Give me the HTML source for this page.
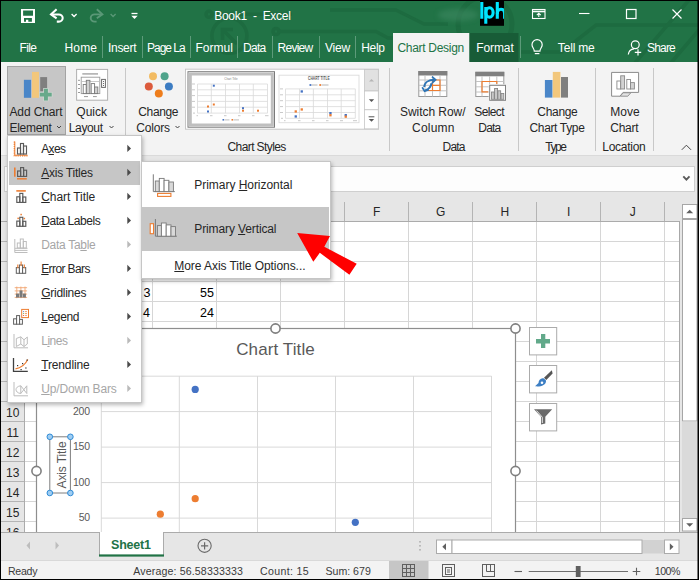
<!DOCTYPE html>
<html>
<head>
<meta charset="utf-8">
<title>Book1 - Excel</title>
<style>
*{box-sizing:border-box;margin:0;padding:0}
html,body{width:699px;height:580px;overflow:hidden}
body{font-family:"Liberation Sans",sans-serif;font-size:12px;color:#262626;background:#e6e6e6;position:relative}
.abs{position:absolute}
.t{position:absolute;white-space:pre;line-height:1}
#titlebar{left:0;top:0;width:699px;height:62px;background:#217346}
.tab{position:absolute;top:40px;color:#fff;font-size:13px;white-space:nowrap;line-height:15px}
.tsep{position:absolute;top:36px;width:1px;height:22px;background:#4b8f6a}
#ribbon{left:0;top:62px;width:699px;height:93px;background:#f3f3f3}
.rl{position:absolute;white-space:nowrap;font-size:12px;line-height:16px;color:#262626;text-align:center}
.gl{position:absolute;top:140px;font-size:12px;line-height:14px;color:#262626;white-space:nowrap}
.gsep{position:absolute;top:69px;width:1px;height:82px;background:#c6c6c6}
.colh{position:absolute;top:201px;height:20px;width:64px;text-align:center;font-size:13px;line-height:21px;color:#262626;border-right:1px solid #b8b8b8}
.rowh{position:absolute;left:1px;width:24px;height:20px;text-align:center;font-size:13px;line-height:21px;color:#262626;border-bottom:1px solid #b8b8b8;background:#e6e6e6}
.cell{position:absolute;font-size:13px;line-height:20px;color:#000;text-align:right;width:60px}
.mi{position:absolute;left:41px;font-size:13px;line-height:16px;color:#262626;white-space:nowrap}
.mi.dis{color:#a6a6a6}
.arr{position:absolute;left:126px;width:0;height:0;border-left:5px solid #444;border-top:4px solid transparent;border-bottom:4px solid transparent}
.arr.dis{border-left-color:#b5b5b5}
u{text-decoration:underline;text-underline-offset:1px}
.ytick{position:absolute;width:40px;text-align:right;font-size:12px;line-height:14px;color:#595959}
.st{position:absolute;top:565px;font-size:12px;line-height:14px;color:#3b3b3b;white-space:nowrap}
</style>
</head>
<body>

<!-- ================= TITLE BAR ================= -->
<div id="titlebar" class="abs">
  <svg class="abs" style="left:0;top:0" width="699" height="62" viewBox="0 0 699 62">
    <!-- faint background decoration -->
    <defs><filter id="bl" x="-50%" y="-50%" width="200%" height="200%"><feGaussianBlur stdDeviation="2.5"/></filter></defs>
    <g fill="none" stroke="#1d6a3f" stroke-width="3.6" opacity="0.85">
      <circle cx="229.4" cy="35.8" r="17.5"/>
      <path d="M237 44 L223 30 M233 29.5 H222.5 V40"/>
      <circle cx="209" cy="14.3" r="3"/>
      <path d="M212 14.3 H292"/>
      <circle cx="276" cy="31.5" r="3"/>
      <path d="M279 31.5 H376 L388 38 H432"/>
      <path d="M330 10 H396 L424 24 H448"/>
      <circle cx="485" cy="24" r="27" stroke-width="5"/>
      <path d="M520 52 H562 L596 25 H699"/>
      <path d="M689 0 L634 64"/>
      <path d="M699 30 L670 64"/>
    </g>
    <ellipse cx="458" cy="15" rx="20" ry="6" fill="#3f8a63" opacity="0.55" filter="url(#bl)"/>
  </svg>
</div>

<!-- QAT icons + title + window controls -->
<svg class="abs" style="left:0;top:0" width="699" height="62" viewBox="0 0 699 62">
  <!-- save -->
  <path fill-rule="evenodd" fill="#fff" d="M21 8.9 H35 V22.9 H21 Z M23.1 10.4 V15.7 H33 V10.4 Z M24 18 V21.7 H26 V19.8 H28.3 V21.7 H31.9 V18 Z"/>
  <!-- undo -->
  <g fill="none" stroke="#fff" stroke-width="2.05">
    <path d="M56.6 9.3 L51 14.4 L56.6 18.3"/>
    <path d="M51.5 14.4 H58.8 A3.9 3.6 0 0 1 58.8 21.6 H56.8"/>
  </g>
  <path d="M71.6 14 L74.1 16.5 L76.6 14" fill="none" stroke="#fff" stroke-width="1.3"/>
  <!-- redo (disabled) -->
  <g fill="none" stroke="#5a9877" stroke-width="1.9">
    <path d="M96.8 9.3 L102.4 14.4 L96.8 18.3"/>
    <path d="M101.9 14.4 H94.6 A3.9 3.6 0 0 0 94.6 21.6 H96.6"/>
  </g>
  <path d="M110.6 14 L113.1 16.5 L115.6 14" fill="none" stroke="#5a9877" stroke-width="1.3"/>
  <!-- customize QAT -->
  <path d="M131.5 13.5 H137.5" stroke="#fff" stroke-width="1.3"/>
  <path d="M131.3 15.8 H137.7 L134.5 19 Z" fill="#fff"/>
  <!-- lph logo -->
  <rect x="480" y="1" width="24" height="24.8" fill="#000"/>
  <clipPath id="lc"><rect x="480" y="1" width="24" height="24.8"/></clipPath>
  <g fill="none" stroke="#00e5ff" stroke-width="3.1" clip-path="url(#lc)">
    <path d="M481.8 2 V18.7"/>
    <path d="M485.8 7 V23.7"/>
    <ellipse cx="489.5" cy="12.4" rx="3.6" ry="4.7"/>
    <path d="M497.3 2 V18.7"/>
    <path d="M497.3 14 C497.3 10.2 499.3 9.3 501 9.3 C503.2 9.3 504.6 10.6 504.6 13.2 V18.7"/>
  </g>
  <!-- ribbon display options -->
  <g fill="none" stroke="#fff" stroke-width="1.1">
    <rect x="532.5" y="9.5" width="12.5" height="9"/>
    <path d="M532.5 11.5 H545" stroke-width="1.6"/>
    <path d="M538.8 17 V13.6 M536.8 15.2 L538.8 13.3 L540.8 15.2"/>
  </g>
  <!-- minimize -->
  <path d="M579 13.5 H589.5" stroke="#fff" stroke-width="1.1"/>
  <!-- maximize -->
  <rect x="626.5" y="9.5" width="9.5" height="9" fill="none" stroke="#fff" stroke-width="1.2"/>
  <!-- close -->
  <path d="M672.5 9.5 L681.5 18.5 M681.5 9.5 L672.5 18.5" stroke="#fff" stroke-width="1.2"/>
  <!-- tab separators -->
  <g stroke="#5d9b7a" stroke-width="1">
    <path d="M102.5 36 V58 M142.5 36 V58 M190.5 36 V58 M237.5 36 V58 M272.5 36 V58 M319.5 36 V58 M355.5 36 V58 M520.5 36 V58"/>
  </g>
  <!-- active tab -->
  <rect x="393" y="33" width="76.5" height="29" fill="#f3f3f3"/>
  <rect x="469.5" y="33" width="49" height="29" fill="#185c37"/>
  <!-- lightbulb -->
  <g fill="none" stroke="#fff" stroke-width="1.2">
    <path d="M534.3 51.2 C534.3 48.5 532 47.5 532 44.8 A5.1 5.1 0 0 1 542.2 44.8 C542.2 47.5 539.9 48.5 539.9 51.2 Z"/>
    <path d="M534.8 53.6 H539.4"/>
  </g>
  <!-- share person -->
  <g fill="none" stroke="#fff" stroke-width="1.2">
    <circle cx="635.3" cy="44.8" r="3.9"/>
    <path d="M628.3 54.5 C628.8 50.5 631.5 49 634 48.8"/>
    <path d="M634.8 52.3 H641.2 M638 49.2 V55.5"/>
  </g>
</svg>
<span class="t" style="left:214.30px;top:9.84px;font-size:12px;color:#fff;letter-spacing:-0.300px">Book1  -  Excel</span>
<span class="t" style="left:19.50px;top:41.64px;font-size:12px;color:#fff;letter-spacing:-0.612px">File</span>
<span class="t" style="left:64.50px;top:41.64px;font-size:12px;color:#fff;letter-spacing:0.163px">Home</span>
<span class="t" style="left:108.00px;top:41.64px;font-size:12px;color:#fff;letter-spacing:-0.302px">Insert</span>
<span class="t" style="left:147.00px;top:41.64px;font-size:12px;color:#fff;letter-spacing:-1.001px">Page La</span>
<span class="t" style="left:195.50px;top:41.64px;font-size:12px;color:#fff;letter-spacing:0.032px">Formul</span>
<span class="t" style="left:243.00px;top:41.64px;font-size:12px;color:#fff;letter-spacing:-0.716px">Data</span>
<span class="t" style="left:277.50px;top:41.64px;font-size:12px;color:#fff;letter-spacing:-0.729px">Review</span>
<span class="t" style="left:325.00px;top:41.64px;font-size:12px;color:#fff;letter-spacing:-0.198px">View</span>
<span class="t" style="left:361.20px;top:41.64px;font-size:12px;color:#fff;letter-spacing:-0.294px">Help</span>
<span class="t" style="left:397.50px;top:41.64px;font-size:12px;color:#217346;letter-spacing:-0.303px">Chart Design</span>
<span class="t" style="left:476.20px;top:41.64px;font-size:12px;color:#fff;letter-spacing:-0.081px">Format</span>
<span class="t" style="left:557.80px;top:41.64px;font-size:12px;color:#fff;letter-spacing:-0.168px">Tell me</span>
<span class="t" style="left:647.00px;top:41.64px;font-size:12px;color:#fff;letter-spacing:-0.806px">Share</span>
<div class="abs" style="left:0;top:0;width:699px;height:1px;background:#000"></div>

<!-- ================= RIBBON ================= -->

<div id="ribbon" class="abs"></div>
<svg class="abs" style="left:0;top:62px" width="699" height="95" viewBox="0 62 699 95">
  <!-- Add chart element button (pressed) -->
  <rect x="7.5" y="66.5" width="58" height="68" fill="#c6c6c6" stroke="#a3a3a3"/>
  <rect x="23.9" y="79.8" width="7.2" height="18" fill="#4a86c8"/>
  <rect x="32" y="71.9" width="7" height="25.9" fill="#f2c77c"/>
  <rect x="40.2" y="77.1" width="6.9" height="14.2" fill="#7f7f7f"/>
  <path d="M44 88.8 H47.9 V92.7 H51.7 V96.5 H47.9 V100.4 H44 V96.5 H39.9 V92.7 H44 Z" fill="#cdd5d0" stroke="#cdd5d0" stroke-width="1.6"/><path d="M44 88.8 H47.9 V92.7 H51.7 V96.5 H47.9 V100.4 H44 V96.5 H39.9 V92.7 H44 Z" fill="#67a98a"/>
  <path d="M57 126 L59 128 L61 126" fill="none" stroke="#444" stroke-width="1"/>
  <!-- Quick layout -->
  <rect x="76.6" y="69.4" width="31" height="30.8" fill="#fff" stroke="#b0b0b0"/>
  <path d="M82.3 73.9 H98" stroke="#ababab" stroke-width="1.5"/>
  <rect x="81.2" y="77.2" width="18.6" height="16.4" fill="#fff" stroke="#9a9a9a" stroke-width="0.9"/>
  <path d="M81.2 81.5 H99.8" stroke="#bdbdbd" stroke-width="0.8"/>
  <g stroke="#7a7a7a" stroke-width="0.9">
    <rect x="83.2" y="84.5" width="3.1" height="9.1" fill="#fff"/>
    <rect x="86.3" y="80.3" width="3.6" height="13.3" fill="#d2d2d2"/>
    <rect x="91.2" y="83.6" width="3.4" height="10" fill="#fff"/>
    <rect x="94.6" y="87" width="3.2" height="6.6" fill="#d2d2d2"/>
    <rect x="101.6" y="79.4" width="3.8" height="8" fill="#fff" stroke="#6a6a6a" stroke-width="1"/>
  </g>
  <path d="M78 80.3 H80 M78 84.5 H80 M78 88.5 H80 M78 92.5 H80 M84 96.6 H88 M93 96.6 H96.8" stroke="#9a9a9a" stroke-width="1"/>
  <g fill="#6a6a6a"><rect x="103" y="81" width="1" height="1"/><rect x="103" y="83" width="1" height="1"/><rect x="103" y="85" width="1" height="1"/></g>
  <path d="M109.5 126 L111.5 128 L113.5 126" fill="none" stroke="#444" stroke-width="1"/>
  <!-- Change colors -->
  <circle cx="153" cy="76.2" r="4" fill="#f2bb62"/>
  <circle cx="164.6" cy="76.2" r="4" fill="#4fa38b"/>
  <circle cx="148.8" cy="86.4" r="4" fill="#dc5b3c"/>
  <circle cx="168.9" cy="86.4" r="4" fill="#3c7cc2"/>
  <circle cx="158.8" cy="93.4" r="4" fill="#ee7d1c"/>
  <path d="M175.5 126 L177.5 128 L179.5 126" fill="none" stroke="#444" stroke-width="1"/>
  <!-- group separators -->
  <path d="M125.5 68 V151 M389.5 68 V151 M518.5 68 V151 M595.5 68 V151 M653.5 68 V151" stroke="#c8c8c8" stroke-width="1"/>
  <!-- gallery -->
  <g transform="translate(0,0.7)">
  <rect x="185.5" y="68.5" width="193" height="60" fill="#fff" stroke="#c6c6c6"/>
  <!-- thumb1 selected -->
  <rect x="188" y="71" width="86.5" height="55.5" fill="#fff" stroke="#7a7a7a"/>
  <rect x="190.3" y="73.3" width="82" height="51" fill="#fff" stroke="#bfbfbf" stroke-width="3"/>
  <g stroke="#d9d9d9" stroke-width="0.8">
    <path d="M197.5 83.3 H267.5 M197.5 89.1 H267.5 M197.5 94.9 H267.5 M197.5 100.7 H267.5 M197.5 106.5 H267.5 M197.5 112.4 H267.5"/>
    <path d="M197.5 83.3 V112.4 M211.3 83.3 V112.4 M225.5 83.3 V112.4 M239.5 83.3 V112.4 M253.3 83.3 V112.4 M267.5 83.3 V112.4"/>
  </g>
  <text x="224.3" y="79.6" font-family="Liberation Sans, sans-serif" font-size="3.5" fill="#808080" textLength="13.2" lengthAdjust="spacingAndGlyphs">Chart Title</text>
  <path d="M192 83.3 H195 M192 89.1 H195 M192 94.9 H195 M192 100.7 H195 M192 106.5 H195 M193 112.4 H195 M196.5 115 H198 M210 115 H212.5 M224 115 H226.5 M238 115 H240.5 M252 115 H254.5 M265 115 H268.5" stroke="#c9c9c9" stroke-width="1"/>
  <g fill="#4472c4"><rect x="212.8" y="84" width="2" height="2"/><rect x="207" y="109.8" width="2" height="2"/><rect x="242" y="106.5" width="2" height="2"/><rect x="222.5" y="118.3" width="1.6" height="1.6"/></g>
  <g fill="#ed7d31"><rect x="207" y="104.8" width="2" height="2"/><rect x="212.8" y="102.8" width="2" height="2"/><rect x="242" y="109" width="2" height="2"/><rect x="257" y="109" width="2" height="2"/><rect x="231.5" y="118.3" width="1.6" height="1.6"/></g>
  <path d="M224.5 119.2 H229.5 M233.5 119.2 H239" stroke="#bdbdbd" stroke-width="1"/>
  <!-- thumb2 -->
  <rect x="279" y="74.5" width="80" height="47.5" fill="#fff" stroke="#dcdcdc" stroke-width="0.9"/>
  <g stroke="#d9d9d9" stroke-width="0.8">
    <path d="M285.5 88.2 H355.3 M285.5 94.1 H355.3 M285.5 100 H355.3 M285.5 105.9 H355.3 M285.5 111.8 H355.3 M285.5 117.6 H355.3"/>
    <path d="M285.5 88.2 V117.6 M299.5 88.2 V117.6 M313.4 88.2 V117.6 M327.5 88.2 V117.6 M341.2 88.2 V117.6 M355.3 88.2 V117.6"/>
  </g>
  <text x="308.1" y="79.6" font-family="Liberation Sans, sans-serif" font-size="4.6" font-weight="bold" fill="#595959" textLength="21.6" lengthAdjust="spacingAndGlyphs">CHART TITLE</text>
  <path d="M311.5 84.3 H317.5 M321.5 84.3 H328.5" stroke="#b5b5b5" stroke-width="1"/>
  <path d="M280 88.2 H283 M280 94.1 H283 M280 100 H283 M280 105.9 H283 M280 111.8 H283 M281 117.6 H283 M284 120 H285.5 M298 120 H300.5 M312 120 H314.5 M326 120 H328.5 M340 120 H343 M353 120 H357" stroke="#c9c9c9" stroke-width="1"/>
  <g fill="#4472c4"><rect x="300.6" y="89.6" width="2.3" height="2.3"/><rect x="294.6" y="114.6" width="2.3" height="2.3"/><rect x="329.3" y="111.3" width="2.3" height="2.3"/><rect x="344.6" y="113.3" width="2.3" height="2.3"/><rect x="309.5" y="83.4" width="1.8" height="1.8"/></g>
  <g fill="#ed7d31"><rect x="294.6" y="109.6" width="2.3" height="2.3"/><rect x="300.6" y="107.6" width="2.3" height="2.3"/><rect x="329.3" y="113.4" width="2.3" height="2.3"/><rect x="344.6" y="114.8" width="2.3" height="2.3"/><rect x="319.3" y="83.4" width="1.8" height="1.8"/></g>
  </g>
  <!-- gallery scroll -->
  <g transform="translate(0,0.5)">
  <rect x="364.5" y="69" width="13.8" height="21.5" fill="#e1e1e1" stroke="#c6c6c6" stroke-width="0.8"/>
  <rect x="364.5" y="90.5" width="13.8" height="18.8" fill="#fff" stroke="#c6c6c6" stroke-width="0.8"/>
  <rect x="364.5" y="109.3" width="13.8" height="19" fill="#fff" stroke="#c6c6c6" stroke-width="0.8"/>
  <path d="M369 81 L371.5 78.5 L374 81 Z" fill="#b5b5b5"/>
  <path d="M368.8 98.8 H374.2 L371.5 101.5 Z" fill="#555"/>
  <path d="M368.6 116.3 H374.4" stroke="#555" stroke-width="1"/>
  <path d="M368.8 118.6 H374.2 L371.5 121.3 Z" fill="#555"/>
  </g>
  <!-- Switch Row/Column -->
  <rect x="418.8" y="71.5" width="28" height="25" fill="#fff" stroke="#9a9a9a"/>
  <rect x="418.3" y="71" width="29" height="4.5" fill="#808080"/>
  <path d="M419 80 H446.5 M419 85.3 H446.5 M419 90.8 H446.5 M425 75.5 V96.5 M432.5 75.5 V96.5 M440 75.5 V96.5" stroke="#c3c3c3" stroke-width="1"/>
  <path d="M432.5 80 H440 V90.5 H428 M432.5 80 V90.5 M432.5 85.3 H440" fill="none" stroke="#ed7d31" stroke-width="1.2"/>
  <g fill="none" stroke="#2e75b6" stroke-width="2">
    <path d="M424.3 87 C424.3 82.5 428.5 79.8 434.5 79.8"/>
    <path d="M432 76.6 L435.6 79.8 L432 83" stroke-width="1.7"/>
    <path d="M431.5 83.2 C431 87 428.5 89.5 425.3 90.3"/>
    <path d="M422.2 87.2 L424.6 91.2 L428.8 89.6" stroke-width="1.7"/>
  </g>
  <!-- Select Data -->
  <rect x="475.8" y="72.3" width="28" height="24.2" fill="#fff" stroke="#9a9a9a"/>
  <rect x="475.3" y="71.8" width="29" height="4.5" fill="#808080"/>
  <path d="M476 81.5 H503.5 M476 86.8 H503.5 M476 92 H503.5 M482 76.3 V96.5 M489.6 76.3 V96.5 M496.8 76.3 V96.5" stroke="#c3c3c3" stroke-width="1"/>
  <path d="M496.8 84 V81.5 H482 V91.8 H488.5" fill="none" stroke="#ed7d31" stroke-width="1.2"/>
  <rect x="488.6" y="84.2" width="17.8" height="17" fill="#f3f3f3"/>
  <rect x="489.7" y="85.3" width="15.8" height="15" fill="#fff" stroke="#7f7f7f" stroke-width="1"/>
  <g fill="#c8c8c8" stroke="#7f7f7f" stroke-width="0.8"><rect x="491.5" y="92" width="2.7" height="7.3"/><rect x="494.6" y="88.4" width="3" height="10.9"/><rect x="497.9" y="90.8" width="2.8" height="8.5"/><rect x="501" y="93.5" width="2.8" height="5.8"/></g>
  <!-- Change chart type -->
  <rect x="544.9" y="80" width="7.6" height="17.6" fill="#4a86c8"/>
  <rect x="552.8" y="71.9" width="7.6" height="25.7" fill="#f2c77c"/>
  <rect x="561" y="77" width="7" height="20.6" fill="#7f7f7f"/>
  <!-- Move chart -->
  <path d="M611.6 72.4 H638.6 V92.4 H623 L620 96.2 H611.6 Z" fill="#fff" stroke="#8a8a8a" stroke-width="1"/>
  <path d="M620.2 96.2 L623.2 92.8 H630.8 L627.8 96.2 Z" fill="#e4e4e4" stroke="#8a8a8a" stroke-width="0.9"/>
  <g stroke="#8a8a8a" stroke-width="0.9"><rect x="616.9" y="81" width="3.8" height="8" fill="#fff"/><rect x="620.7" y="75.8" width="3.9" height="13.2" fill="#d2d2d2"/><rect x="626.8" y="79.5" width="3.7" height="9.5" fill="#fff"/><rect x="630.5" y="82.6" width="3.9" height="6.4" fill="#d2d2d2"/></g>
  <!-- collapse chevron -->
  <path d="M681.8 149.8 L686.4 145.2 L691 149.8" fill="none" stroke="#444" stroke-width="1"/>
</svg>
<span class="t" style="left:9.50px;top:106.04px;font-size:12px;color:#262626;letter-spacing:-0.129px">Add Chart</span>
<span class="t" style="left:9.50px;top:122.04px;font-size:12px;color:#262626;letter-spacing:-0.287px">Element</span>
<span class="t" style="left:76.30px;top:106.04px;font-size:12px;color:#262626;letter-spacing:0.006px">Quick</span>
<span class="t" style="left:68.80px;top:122.04px;font-size:12px;color:#262626;letter-spacing:-0.366px">Layout</span>
<span class="t" style="left:138.30px;top:106.04px;font-size:12px;color:#262626;letter-spacing:-0.367px">Change</span>
<span class="t" style="left:136.30px;top:122.04px;font-size:12px;color:#262626;letter-spacing:-0.195px">Colors</span>
<span class="t" style="left:227.50px;top:141.04px;font-size:12px;color:#262626;letter-spacing:-0.596px">Chart Styles</span>
<span class="t" style="left:400.00px;top:106.04px;font-size:12px;color:#262626;letter-spacing:-0.052px">Switch Row/</span>
<span class="t" style="left:412.00px;top:122.04px;font-size:12px;color:#262626;letter-spacing:0.230px">Column</span>
<span class="t" style="left:474.30px;top:106.04px;font-size:12px;color:#262626;letter-spacing:-0.631px">Select</span>
<span class="t" style="left:478.30px;top:122.04px;font-size:12px;color:#262626;letter-spacing:-0.783px">Data</span>
<span class="t" style="left:442.50px;top:141.04px;font-size:12px;color:#262626;letter-spacing:-0.783px">Data</span>
<span class="t" style="left:537.30px;top:106.04px;font-size:12px;color:#262626;letter-spacing:-0.307px">Change</span>
<span class="t" style="left:529.50px;top:122.04px;font-size:12px;color:#262626;letter-spacing:-0.353px">Chart Type</span>
<span class="t" style="left:545.30px;top:141.04px;font-size:12px;color:#262626;letter-spacing:-1.439px">Type</span>
<span class="t" style="left:610.30px;top:106.04px;font-size:12px;color:#262626;letter-spacing:0.052px">Move</span>
<span class="t" style="left:610.30px;top:122.04px;font-size:12px;color:#262626;letter-spacing:-0.286px">Chart</span>
<span class="t" style="left:602.30px;top:141.04px;font-size:12px;color:#262626;letter-spacing:-0.267px">Location</span>

<div class="abs" style="left:0;top:155px;width:699px;height:1px;background:#dadada"></div>

<!-- ================= FORMULA BAR ================= -->
<div id="fbar" class="abs" style="left:4px;top:166px;width:691px;height:26px;background:#fdfdfd;border:1px solid #cfcfcf"></div>

<!-- ================= GRID ================= -->
<svg class="abs" style="left:0;top:195px" width="699" height="338" viewBox="0 195 699 338">
<rect x="25" y="221" width="654.5" height="312" fill="#fff"/>
<path d="M25 241.5 H679 M25 261.5 H679 M25 281.5 H679 M25 301.5 H679 M25 321.5 H679 M25 341.5 H679 M25 361.5 H679 M25 381.5 H679 M25 401.5 H679 M25 421.5 H679 M25 441.5 H679 M25 461.5 H679 M25 481.5 H679 M25 501.5 H679 M25 521.5 H679 M88.5 221 V533 M152.5 221 V533 M216.5 221 V533 M280.5 221 V533 M344.5 221 V533 M408.5 221 V533 M472.5 221 V533 M536.5 221 V533 M600.5 221 V533 M664.5 221 V533" stroke="#d6d6d6" stroke-width="1" fill="none"/>
<rect x="1" y="201" width="679" height="20" fill="#e6e6e6"/>
<rect x="1" y="221" width="24" height="312" fill="#e6e6e6"/>
<path d="M1 221.5 H680" stroke="#ababab" stroke-width="1"/>
<path d="M24.5 202 V533" stroke="#ababab" stroke-width="1"/>
<path d="M88.5 202 V221 M152.5 202 V221 M216.5 202 V221 M280.5 202 V221 M344.5 202 V221 M408.5 202 V221 M472.5 202 V221 M536.5 202 V221 M600.5 202 V221 M664.5 202 V221" stroke="#b4b4b4" stroke-width="1"/>
<path d="M1 241.5 H24 M1 261.5 H24 M1 281.5 H24 M1 301.5 H24 M1 321.5 H24 M1 341.5 H24 M1 361.5 H24 M1 381.5 H24 M1 401.5 H24 M1 421.5 H24 M1 441.5 H24 M1 461.5 H24 M1 481.5 H24 M1 501.5 H24 M1 521.5 H24" stroke="#b4b4b4" stroke-width="1"/>
<path d="M679.5 221 V533" stroke="#a8a8a8" stroke-width="1"/>
<rect x="682.5" y="204.5" width="14.5" height="14" fill="#fff" stroke="#a6a6a6"/>
<path d="M686.2 213.3 L689.7 209.8 L693.2 213.3 Z" fill="#606060"/>
<rect x="682.5" y="219.5" width="14.5" height="201.5" fill="#fff" stroke="#a6a6a6"/>
<rect x="682" y="421.5" width="15.5" height="97" fill="#dadada"/>
<rect x="682.5" y="518.5" width="14.5" height="12.5" fill="#fff" stroke="#a6a6a6"/>
<path d="M686.2 523.2 H693.2 L689.7 526.8 Z" fill="#606060"/>
<rect x="36.5" y="328.5" width="479" height="230" fill="#fff" stroke="#8e8e8e" stroke-width="1.2"/>
<path d="M101 376.2 H491.5 M101 411.6 H491.5 M101 447.1 H491.5 M101 482.6 H491.5 M101 518.1 H491.5 M101.3 376 V533 M179.3 376 V533 M257.5 376 V533 M335.5 376 V533 M413.5 376 V533 M491.5 376 V533" stroke="#d9d9d9" stroke-width="1" fill="none"/>
<circle cx="195.2" cy="389.4" r="3.6" fill="#4472c4"/><circle cx="355.3" cy="522.3" r="3.6" fill="#4472c4"/>
<circle cx="195.2" cy="498.7" r="3.6" fill="#ed7d31"/><circle cx="160.3" cy="514.2" r="3.6" fill="#ed7d31"/>
<rect x="49.8" y="436.8" width="20.6" height="56.2" fill="#fff" stroke="#7f7f7f" stroke-width="1"/>
<circle cx="49.8" cy="436.8" r="2.8" fill="#9fcdf2" stroke="#2f8bd6" stroke-width="1"/>
<circle cx="70.4" cy="436.8" r="2.8" fill="#9fcdf2" stroke="#2f8bd6" stroke-width="1"/>
<circle cx="49.8" cy="493.0" r="2.8" fill="#9fcdf2" stroke="#2f8bd6" stroke-width="1"/>
<circle cx="70.4" cy="493.0" r="2.8" fill="#9fcdf2" stroke="#2f8bd6" stroke-width="1"/>
<circle cx="275.5" cy="328.5" r="4.6" fill="#fff" stroke="#7f7f7f" stroke-width="1.6"/>
<circle cx="515.5" cy="328.5" r="4.6" fill="#fff" stroke="#7f7f7f" stroke-width="1.6"/>
<circle cx="36.5" cy="471.0" r="4.6" fill="#fff" stroke="#7f7f7f" stroke-width="1.6"/>
<circle cx="515.5" cy="471.0" r="4.6" fill="#fff" stroke="#7f7f7f" stroke-width="1.6"/>
<rect x="529.5" y="327.5" width="27.2" height="27.4" fill="#fff" stroke="#ababab" stroke-width="1"/>
<rect x="529.5" y="365.5" width="27.2" height="27.4" fill="#fff" stroke="#ababab" stroke-width="1"/>
<rect x="529.5" y="403.5" width="27.2" height="27.4" fill="#fff" stroke="#ababab" stroke-width="1"/>
<path d="M541 334 H545.3 V339.1 H550 V343.4 H545.3 V348 H541 V343.4 H536 V339.1 H541 Z" fill="#62a98a"/>
<path d="M551.8 370.3 L552.6 373.5 L546.3 380 L544 377.8 Z" fill="#555"/>
<path d="M544 378.5 C541 377.5 538.5 380 538.5 383 L535 386.3 C540 387 546.5 385.5 546 380.5 Z" fill="#3d7fc4"/>
<circle cx="542" cy="382.8" r="1.3" fill="#fff"/>
<path d="M534 409.2 H552.2 L545.3 416.8 V423.5 L541 424.5 V416.8 Z" fill="#6a6a6a"/>
<path d="M536.5 410.6 L542.3 417.2 V423" stroke="#e8e8e8" stroke-width="1" fill="none"/>
</svg>
<span class="t" style="left:52.80px;top:206.34px;font-size:12px;color:#262626;letter-spacing:0.000px">A</span>
<span class="t" style="left:116.80px;top:206.34px;font-size:12px;color:#262626;letter-spacing:0.000px">B</span>
<span class="t" style="left:180.50px;top:206.34px;font-size:12px;color:#262626;letter-spacing:0.000px">C</span>
<span class="t" style="left:244.50px;top:206.34px;font-size:12px;color:#262626;letter-spacing:0.000px">D</span>
<span class="t" style="left:308.80px;top:206.34px;font-size:12px;color:#262626;letter-spacing:0.000px">E</span>
<span class="t" style="left:373.10px;top:206.34px;font-size:12px;color:#262626;letter-spacing:0.000px">F</span>
<span class="t" style="left:436.10px;top:206.34px;font-size:12px;color:#262626;letter-spacing:0.000px">G</span>
<span class="t" style="left:500.50px;top:206.34px;font-size:12px;color:#262626;letter-spacing:0.000px">H</span>
<span class="t" style="left:567.10px;top:206.34px;font-size:12px;color:#262626;letter-spacing:0.000px">I</span>
<span class="t" style="left:629.80px;top:206.34px;font-size:12px;color:#262626;letter-spacing:0.000px">J</span>
<span class="t" style="left:9.50px;top:227.14px;font-size:12px;color:#262626;letter-spacing:0.000px">1</span>
<span class="t" style="left:9.50px;top:247.14px;font-size:12px;color:#262626;letter-spacing:0.000px">2</span>
<span class="t" style="left:9.50px;top:267.14px;font-size:12px;color:#262626;letter-spacing:0.000px">3</span>
<span class="t" style="left:9.50px;top:287.14px;font-size:12px;color:#262626;letter-spacing:0.000px">4</span>
<span class="t" style="left:9.50px;top:307.14px;font-size:12px;color:#262626;letter-spacing:0.000px">5</span>
<span class="t" style="left:9.50px;top:327.14px;font-size:12px;color:#262626;letter-spacing:0.000px">6</span>
<span class="t" style="left:9.50px;top:347.14px;font-size:12px;color:#262626;letter-spacing:0.000px">7</span>
<span class="t" style="left:9.50px;top:367.14px;font-size:12px;color:#262626;letter-spacing:0.000px">8</span>
<span class="t" style="left:9.50px;top:387.14px;font-size:12px;color:#262626;letter-spacing:0.000px">9</span>
<span class="t" style="left:6.10px;top:407.14px;font-size:12px;color:#262626;letter-spacing:0.052px">10</span>
<span class="t" style="left:6.60px;top:427.14px;font-size:12px;color:#262626;letter-spacing:-0.057px">11</span>
<span class="t" style="left:6.10px;top:447.14px;font-size:12px;color:#262626;letter-spacing:0.052px">12</span>
<span class="t" style="left:6.10px;top:467.14px;font-size:12px;color:#262626;letter-spacing:0.052px">13</span>
<span class="t" style="left:6.10px;top:487.14px;font-size:12px;color:#262626;letter-spacing:0.052px">14</span>
<span class="t" style="left:6.10px;top:507.14px;font-size:12px;color:#262626;letter-spacing:0.052px">15</span>
<span class="t" style="left:6.10px;top:527.14px;font-size:12px;color:#262626;letter-spacing:0.052px">16</span>
<span class="t" style="left:143.50px;top:286.72px;font-size:12.5px;color:#000;letter-spacing:0.000px">3</span>
<span class="t" style="left:200.00px;top:286.72px;font-size:12.5px;color:#000;letter-spacing:0.096px">55</span>
<span class="t" style="left:143.00px;top:306.72px;font-size:12.5px;color:#000;letter-spacing:0.000px">4</span>
<span class="t" style="left:200.00px;top:306.72px;font-size:12.5px;color:#000;letter-spacing:0.096px">24</span>
<span class="t" style="left:236.20px;top:340.81px;font-size:17px;color:#595959;letter-spacing:0.113px">Chart Title</span>
<span class="t" style="left:73.00px;top:405.61px;font-size:10.5px;color:#595959;letter-spacing:-0.260px">200</span>
<span class="t" style="left:73.00px;top:441.11px;font-size:10.5px;color:#595959;letter-spacing:-0.260px">150</span>
<span class="t" style="left:73.00px;top:476.61px;font-size:10.5px;color:#595959;letter-spacing:-0.260px">100</span>
<span class="t" style="left:78.70px;top:512.11px;font-size:10.5px;color:#595959;letter-spacing:-0.380px">50</span>
<div class="abs" style="left:33.7px;top:456.7px;width:56px;height:16px;text-align:center;transform:rotate(-90deg);font-size:12px;line-height:16px;color:#595959;white-space:nowrap;letter-spacing:-0.1px">Axis Title</div>


<!-- ================= MENU ================= -->
<div class="abs" style="left:7px;top:135px;width:134.5px;height:267.5px;background:#fff;border:1px solid #c6c6c6;box-shadow:1px 2px 4px rgba(0,0,0,0.28)"></div>
<div class="abs" style="left:9px;top:161px;width:131px;height:23.8px;background:#c6c6c6"></div>
<div class="abs" style="left:141px;top:161px;width:189.5px;height:117.5px;background:#fff;border:1px solid #c6c6c6;box-shadow:1px 2px 4px rgba(0,0,0,0.28)"></div>
<div class="abs" style="left:142.2px;top:207px;width:187.2px;height:44px;background:#c6c6c6"></div>
<svg class="abs" style="left:0;top:130px" width="380" height="280" viewBox="0 130 380 280">
<path d="M127.3 144.8 V152.0 L131 148.4 Z" fill="#4a4a4a"/>
<path d="M127.3 168.8 V176.0 L131 172.4 Z" fill="#4a4a4a"/>
<path d="M127.3 192.8 V200.0 L131 196.4 Z" fill="#4a4a4a"/>
<path d="M127.3 216.8 V224.0 L131 220.4 Z" fill="#4a4a4a"/>
<path d="M127.3 240.8 V248.0 L131 244.4 Z" fill="#b9b9b9"/>
<path d="M127.3 264.8 V272.0 L131 268.4 Z" fill="#4a4a4a"/>
<path d="M127.3 288.8 V296.0 L131 292.4 Z" fill="#4a4a4a"/>
<path d="M127.3 312.8 V320.0 L131 316.4 Z" fill="#4a4a4a"/>
<path d="M127.3 336.8 V344.0 L131 340.4 Z" fill="#b9b9b9"/>
<path d="M127.3 360.8 V368.0 L131 364.4 Z" fill="#4a4a4a"/>
<path d="M127.3 384.8 V392.0 L131 388.4 Z" fill="#b9b9b9"/>
<path d="M14.3 141.5 V155.8 H27.5" fill="none" stroke="#ed7d31" stroke-width="1.2" stroke-dasharray="1.2 1"/>
<path d="M14.8 141.5 V155.2 H27.5" fill="none" stroke="#ed7d31" stroke-width="1"/>
<rect x="17.5" y="148.0" width="3.0" height="6.0" fill="none" stroke="#5a5a5a" stroke-width="1.15"/><rect x="20.5" y="143.5" width="3.0" height="10.5" fill="none" stroke="#5a5a5a" stroke-width="1.15"/><rect x="23.5" y="146.0" width="3.0" height="8.0" fill="none" stroke="#5a5a5a" stroke-width="1.15"/>
<path d="M14.8 167.4 V176.8" stroke="#ed7d31" stroke-width="1.6"/>
<path d="M17 178.8 H26.8" stroke="#ed7d31" stroke-width="1.5"/>
<rect x="17.6" y="171.0" width="3.0" height="5.4" fill="none" stroke="#5a5a5a" stroke-width="1.15"/><rect x="20.6" y="167.6" width="3.0" height="8.8" fill="none" stroke="#5a5a5a" stroke-width="1.15"/><rect x="23.6" y="170.2" width="3.0" height="6.2" fill="none" stroke="#5a5a5a" stroke-width="1.15"/>
<path d="M16.3 190.9 H25.8" stroke="#ed7d31" stroke-width="1.6"/>
<rect x="16.8" y="196.8" width="3.0" height="5.6" fill="none" stroke="#5a5a5a" stroke-width="1.15"/><rect x="19.8" y="193.4" width="3.0" height="9.0" fill="none" stroke="#5a5a5a" stroke-width="1.15"/><rect x="22.8" y="197.0" width="3.0" height="5.4" fill="none" stroke="#5a5a5a" stroke-width="1.15"/>
<rect x="17.4" y="217.6" width="1.5" height="1.5" fill="#ed7d31"/><rect x="20.4" y="213.8" width="1.5" height="1.5" fill="#ed7d31"/><rect x="23.6" y="217.8" width="1.5" height="1.5" fill="#ed7d31"/>
<rect x="16.8" y="221.1" width="3.0" height="5.2" fill="none" stroke="#5a5a5a" stroke-width="1.15"/><rect x="19.8" y="217.3" width="3.0" height="9.0" fill="none" stroke="#5a5a5a" stroke-width="1.15"/><rect x="22.8" y="221.3" width="3.0" height="5.0" fill="none" stroke="#5a5a5a" stroke-width="1.15"/>
<rect x="17.3" y="243.0" width="3.0" height="5.0" fill="none" stroke="#bdbdbd" stroke-width="1"/><rect x="20.3" y="239.0" width="3.0" height="9.0" fill="none" stroke="#bdbdbd" stroke-width="1"/><rect x="23.3" y="241.5" width="3.0" height="6.5" fill="none" stroke="#bdbdbd" stroke-width="1"/>
<path d="M14.8 239 V252.5 H27.5 M14.8 248.3 H27.5 M14.8 250.4 H27.5" fill="none" stroke="#bdbdbd" stroke-width="1"/>
<g fill="#fff" stroke="#5f5f5f" stroke-width="1"><rect x="16.3" y="267.6" width="3.1" height="5.7"/><rect x="19.4" y="265" width="3.2" height="8.3"/><rect x="22.6" y="267.6" width="3.1" height="5.7"/></g>
<path d="M17.8 264.6 V268.2 M21.1 261.6 V266 M24.3 264.6 V268.2" stroke="#ed7d31" stroke-width="1.1"/>
<path d="M14.7 287.7 H27.1 M14.7 290.9 H27.1 M14.7 294.1 H27.1 M14.7 297.4 H27.1 M16.8 286.6 V298.2 M20.9 286.6 V298.2 M25 286.6 V298.2" stroke="#f0a572" stroke-width="0.9" fill="none"/>
<g fill="#7a7a7a"><rect x="16" y="293.6" width="3" height="3.9"/><rect x="19.5" y="290.4" width="3" height="7.1"/><rect x="22.9" y="293.6" width="3" height="3.9"/></g>
<g fill="#fff" stroke="#5f5f5f" stroke-width="1"><rect x="13.6" y="318.8" width="3" height="5.4"/><rect x="16.6" y="315.6" width="3" height="8.6"/><rect x="19.6" y="319.4" width="2.8" height="4.8"/></g>
<rect x="21.7" y="309.4" width="6.8" height="8.2" fill="#fff" stroke="#ed7d31" stroke-width="1"/>
<path d="M24.8 311.6 H27 M24.8 313.5 H27 M24.8 315.4 H27" stroke="#ed7d31" stroke-width="0.7"/><rect x="23" y="311.2" width="0.9" height="0.9" fill="#4472c4"/><rect x="23" y="313.1" width="0.9" height="0.9" fill="#70ad47"/><rect x="23" y="315" width="0.9" height="0.9" fill="#e0402a"/>
<path d="M14 334 V347.8 H28" fill="none" stroke="#bdbdbd" stroke-width="1"/>
<path d="M16.3 338.5 L20.8 336.8 L24 339.8 L27.3 337 V344 L24 346.5 L20.8 344 L16.3 346.5 Z M20.8 336.8 V344 M24 339.8 V346.5" fill="none" stroke="#bdbdbd" stroke-width="1"/>
<path d="M13.5 358 V371.3 H27.8" fill="none" stroke="#404040" stroke-width="1.3"/>
<path d="M15.5 368.8 C21 368 25 365 27.8 359.5" fill="none" stroke="#ed7d31" stroke-width="1.2"/>
<g fill="#333"><rect x="17" y="365" width="1.2" height="1.2"/><rect x="20.5" y="369" width="1.2" height="1.2"/><rect x="22" y="363" width="1.2" height="1.2"/><rect x="25.3" y="367.4" width="1.2" height="1.2"/><rect x="26.5" y="359.5" width="1.2" height="1.2"/></g>
<path d="M14 382 V395.8 H28" fill="none" stroke="#bdbdbd" stroke-width="1"/>
<path d="M20.8 385.8 C17.5 386 16 388 16 389.6 C16 391.3 17.5 393.2 20.8 393.5 Z M20.8 385.8 L26.8 393.5 V385.8 L20.8 393.5" fill="none" stroke="#bdbdbd" stroke-width="1"/>
<path d="M153.3 174.3 V191.6 H174.8" fill="none" stroke="#7a7a7a" stroke-width="1"/><rect x="155.3" y="181.0" width="4.0" height="10.6" fill="#d9d9d9" stroke="#7a7a7a" stroke-width="0.9"/><rect x="159.3" y="178.4" width="4.8" height="13.2" fill="#fff" stroke="#7a7a7a" stroke-width="0.9"/><rect x="164.1" y="180.3" width="4.8" height="11.3" fill="#fff" stroke="#7a7a7a" stroke-width="0.9"/><rect x="168.9" y="182.0" width="4.5" height="9.6" fill="#d9d9d9" stroke="#7a7a7a" stroke-width="0.9"/>
<rect x="157.6" y="193.4" width="13.3" height="3" fill="#fff" stroke="#ed7d31" stroke-width="1.1"/>
<path d="M155.4 219.0 V236.2 H176.9" fill="none" stroke="#7a7a7a" stroke-width="1"/><rect x="157.4" y="225.6" width="4.0" height="10.6" fill="#d9d9d9" stroke="#7a7a7a" stroke-width="0.9"/><rect x="161.4" y="223.0" width="4.8" height="13.2" fill="#fff" stroke="#7a7a7a" stroke-width="0.9"/><rect x="166.2" y="224.9" width="4.8" height="11.3" fill="#fff" stroke="#7a7a7a" stroke-width="0.9"/><rect x="171.0" y="226.6" width="4.5" height="9.6" fill="#d9d9d9" stroke="#7a7a7a" stroke-width="0.9"/>
<rect x="150.2" y="223.7" width="3.3" height="10" fill="#fff" stroke="#ed7d31" stroke-width="1.1"/>
<path d="M297.2 232.9 L330 236.1 L324.3 246.7 L356.7 263.8 L349.4 274.7 L319.8 252.8 L313.3 261.8 Z" fill="#ff0000"/>
</svg>
<span class="t" style="left:41.20px;top:143.24px;font-size:12px;color:#262626;letter-spacing:-0.659px">A<u>x</u>es</span>
<span class="t" style="left:41.20px;top:167.24px;font-size:12px;color:#262626;letter-spacing:-0.231px"><u>A</u>xis Titles</span>
<span class="t" style="left:41.20px;top:191.24px;font-size:12px;color:#262626;letter-spacing:-0.069px"><u>C</u>hart Title</span>
<span class="t" style="left:41.20px;top:215.24px;font-size:12px;color:#262626;letter-spacing:-0.454px"><u>D</u>ata Labels</span>
<span class="t" style="left:41.20px;top:239.24px;font-size:12px;color:#a6a6a6;letter-spacing:-0.284px">Data Ta<u>b</u>le</span>
<span class="t" style="left:41.20px;top:263.24px;font-size:12px;color:#262626;letter-spacing:-0.597px"><u>E</u>rror Bars</span>
<span class="t" style="left:41.20px;top:287.24px;font-size:12px;color:#262626;letter-spacing:-0.269px"><u>G</u>ridlines</span>
<span class="t" style="left:41.20px;top:311.24px;font-size:12px;color:#262626;letter-spacing:-0.349px"><u>L</u>egend</span>
<span class="t" style="left:41.20px;top:335.24px;font-size:12px;color:#a6a6a6;letter-spacing:-0.497px">L<u>i</u>nes</span>
<span class="t" style="left:41.20px;top:359.24px;font-size:12px;color:#262626;letter-spacing:-0.136px"><u>T</u>rendline</span>
<span class="t" style="left:41.20px;top:383.24px;font-size:12px;color:#a6a6a6;letter-spacing:-0.160px"><u>U</u>p/Down Bars</span>
<span class="t" style="left:194.30px;top:179.34px;font-size:12px;color:#262626;letter-spacing:-0.041px">Primary <u>H</u>orizontal</span>
<span class="t" style="left:194.30px;top:223.14px;font-size:12px;color:#262626;letter-spacing:-0.121px">Primary <u>V</u>ertical</span>
<span class="t" style="left:174.30px;top:259.84px;font-size:12px;color:#262626;letter-spacing:-0.061px"><u>M</u>ore Axis Title Options...</span>
<!-- ================= BOTTOM ================= -->
<svg class="abs" style="left:0;top:532px" width="699" height="48" viewBox="0 532 699 48">
  <rect x="0" y="532" width="699" height="28.5" fill="#e6e6e6"/>
  <path d="M0 532.5 H699" stroke="#ababab" stroke-width="1"/>
  <rect x="0" y="560.5" width="699" height="19.5" fill="#f3f3f3"/>
  <path d="M0 560.5 H699" stroke="#d9d9d9" stroke-width="1"/>
  <!-- sheet nav arrows -->
  <path d="M30 541.5 L26.5 545.5 L30 549.5 Z" fill="#bdbdbd"/>
  <path d="M55.5 541.5 L59 545.5 L55.5 549.5 Z" fill="#bdbdbd"/>
  <!-- sheet tab -->
  <rect x="99.5" y="532" width="64" height="23" fill="#fff"/>
  <path d="M99.5 532 V555 M163.5 532 V555" stroke="#ababab" stroke-width="1"/>
  <rect x="99" y="554.4" width="65" height="2.2" fill="#217346"/>
  <!-- new sheet -->
  <circle cx="204.6" cy="545.8" r="6.6" fill="none" stroke="#6a6a6a" stroke-width="1.1"/>
  <path d="M201 545.8 H208.2 M204.6 542.2 V549.4" stroke="#6a6a6a" stroke-width="1.2"/>
  <!-- splitter dots -->
  <g fill="#b0b0b0"><rect x="419.2" y="541" width="1.6" height="1.6"/><rect x="419.2" y="545" width="1.6" height="1.6"/><rect x="419.2" y="549" width="1.6" height="1.6"/></g>
  <!-- h scrollbar -->
  <rect x="452" y="540" width="212.5" height="13.5" fill="#d2d2d2"/>
  <rect x="436.5" y="540" width="15.5" height="13.5" fill="#fff" stroke="#ababab"/>
  <path d="M446 543.3 V550.3 L442.3 546.8 Z" fill="#606060"/>
  <rect x="452" y="540" width="190" height="13.5" fill="#fff" stroke="#ababab"/>
  <rect x="664.5" y="540" width="14.5" height="13.5" fill="#fff" stroke="#ababab"/>
  <path d="M669.8 543.3 V550.3 L673.5 546.8 Z" fill="#606060"/>
  <!-- view buttons -->
  <rect x="389" y="561" width="39.5" height="18" fill="#c6c6c6"/>
  <g fill="none" stroke="#5f5f5f" stroke-width="1">
    <rect x="402.5" y="564.5" width="12" height="12"/>
    <path d="M406.5 564.5 V576.5 M410.5 564.5 V576.5 M402.5 568.5 H414.5 M402.5 572.5 H414.5"/>
    <rect x="442.5" y="564.5" width="12" height="12"/>
    <rect x="445.5" y="567.5" width="6" height="7"/>
    <path d="M447 570 H450 M447 572 H450"/>
    <rect x="482.5" y="564.5" width="12" height="12"/>
    <path d="M486.5 564.5 V571.5 H494.5 M490.5 564.5 V571.5"/>
  </g>
  <!-- zoom -->
  <path d="M514.5 571.5 H522" stroke="#5f5f5f" stroke-width="1.1"/>
  <path d="M528.7 571.5 H628" stroke="#6f6f6f" stroke-width="1"/>
  <rect x="575.8" y="566" width="4.8" height="11" fill="#5f5f5f"/>
  <path d="M632.7 571.5 H640.3 M636.5 567.7 V575.3" stroke="#5f5f5f" stroke-width="1.1"/>
</svg>
<span class="t" style="left:111.00px;top:539.42px;font-size:12.5px;color:#217346;letter-spacing:-0.199px;font-weight:bold">Sheet1</span>
<span class="t" style="left:8.00px;top:566.23px;font-size:10.6px;color:#3b3b3b;letter-spacing:-0.285px">Ready</span>
<span class="t" style="left:133.30px;top:566.23px;font-size:10.6px;color:#3b3b3b;letter-spacing:0.138px">Average: 56.58333333</span>
<span class="t" style="left:260.00px;top:566.23px;font-size:10.6px;color:#3b3b3b;letter-spacing:0.329px">Count: 15</span>
<span class="t" style="left:325.50px;top:566.23px;font-size:10.6px;color:#3b3b3b;letter-spacing:-0.010px">Sum: 679</span>
<span class="t" style="left:654.70px;top:566.23px;font-size:10.6px;color:#3b3b3b;letter-spacing:-0.437px">100%</span>
<div class="abs" style="left:0;top:0;width:1px;height:580px;background:#000"></div>
<svg class="abs" style="left:678px;top:170px" width="16" height="16" viewBox="678 170 16 16"><path d="M683.3 176.3 L686.4 179.6 L689.5 176.3" fill="none" stroke="#5a5a5a" stroke-width="1.9"/></svg>
<div class="abs" style="left:697px;top:0;width:1px;height:580px;background:rgba(0,0,0,0.5)"></div>
<div class="abs" style="left:698px;top:0;width:1px;height:580px;background:#000"></div>
<div class="abs" style="left:0;top:579px;width:699px;height:1px;background:#000"></div>
</body>
</html>
